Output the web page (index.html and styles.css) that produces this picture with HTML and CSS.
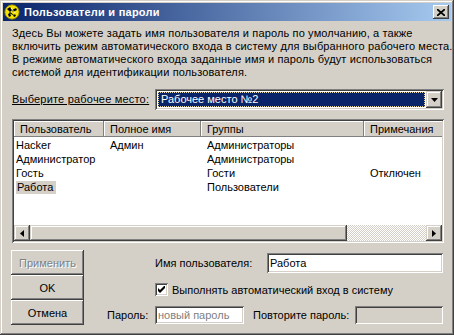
FILE: index.html
```html
<!DOCTYPE html>
<html lang="ru">
<head>
<meta charset="utf-8">
<title>Пользователи и пароли</title>
<link rel="stylesheet" href="styles.css">
</head>
<body>
<div class="window">
  <div class="titlebar">
    <svg class="appicon" viewBox="0 0 16 16" width="16" height="16">
      <circle cx="8" cy="8" r="7.2" fill="#f4e400" stroke="#8a7a00" stroke-width="0.9"/>
      <path d="M3 5 L6 3 L8 6 L6 8 Z" fill="#000"/>
      <path d="M6 8 L10 11 L11 10 L12 12 L10 13 L9 11 L5 9 Z" fill="#000"/>
      <path d="M8 6 L12 4 L13 6 L9 8 Z" fill="#000"/>
      <path d="M4 10 L6 9 L7 12 L5 13 Z" fill="#000"/>
      <path d="M7 4 L11 9" stroke="#fff" stroke-width="0.8"/>
    </svg>
    <span class="title">Пользователи и пароли</span>
    <div class="close">
      <svg viewBox="0 0 8 7" width="8" height="7">
        <path d="M0 0 L8 7 M8 0 L0 7" stroke="#000" stroke-width="1.7"/>
      </svg>
    </div>
  </div>

  <div class="body">
    <div class="intro">
      <div class="line">Здесь Вы можете задать имя пользователя и пароль по умолчанию, а также</div>
      <div class="line">включить режим автоматического входа в систему для выбранного рабочего места.</div>
      <div class="line">В режиме автоматического входа заданные имя и пароль будут использоваться</div>
      <div class="line">системой для идентификации пользователя.</div>
    </div>

    <div class="select-row">
      <span class="select-label">Выберите рабочее место:</span>
      <div class="combo">
        <div class="combo-value"><span>Рабочее место №2</span></div>
        <div class="combo-btn">
          <svg viewBox="0 0 7 4" width="7" height="4"><path d="M0 0 H7 L3.5 4 Z" fill="#000"/></svg>
        </div>
      </div>
    </div>

    <div class="listview">
      <div class="lv-header">
        <div class="hcell">Пользователь</div>
        <div class="hcell">Полное имя</div>
        <div class="hcell">Группы</div>
        <div class="hcell">Примечания</div>
      </div>
      <div class="lv-body">
        <div class="lv-row">
          <div class="cell first">Hacker</div>
          <div class="cell">Админ</div>
          <div class="cell">Администраторы</div>
          <div class="cell"></div>
        </div>
        <div class="lv-row">
          <div class="cell first">Администратор</div>
          <div class="cell"></div>
          <div class="cell">Администраторы</div>
          <div class="cell"></div>
        </div>
        <div class="lv-row">
          <div class="cell first">Гость</div>
          <div class="cell"></div>
          <div class="cell">Гости</div>
          <div class="cell">Отключен</div>
        </div>
        <div class="lv-row">
          <div class="cell first"><span class="sel">Работа</span></div>
          <div class="cell"></div>
          <div class="cell">Пользователи</div>
          <div class="cell"></div>
        </div>
      </div>
      <div class="hscroll">
        <div class="sbtn">
          <svg viewBox="0 0 4 7" width="4" height="7"><path d="M4 0 V7 L0 3.5 Z" fill="#000"/></svg>
        </div>
        <div class="thumb"></div>
        <div class="track"></div>
        <div class="sbtn">
          <svg viewBox="0 0 4 7" width="4" height="7"><path d="M0 0 V7 L4 3.5 Z" fill="#000"/></svg>
        </div>
      </div>
    </div>

    <div class="bottom">
      <div class="buttons">
        <div class="btn disabled">Применить</div>
        <div class="btn">OK</div>
        <div class="btn">Отмена</div>
      </div>
      <div class="form">
        <div class="frow name-row">
          <span class="name-label">Имя пользователя:</span>
          <div class="field name-field">Работа</div>
        </div>
        <div class="frow check-row">
          <div class="checkbox">
            <svg viewBox="0 0 7 7" width="7" height="7"><path d="M0 2 L2 4 L7 -1 V2 L2 7 L0 5 Z" fill="#000"/></svg>
          </div>
          <span class="check-label">Выполнять автоматический вход в систему</span>
        </div>
        <div class="frow pass-row">
          <span class="pass-label">Пароль:</span>
          <div class="field pass-field">новый пароль</div>
          <span class="repeat-label">Повторите пароль:</span>
          <div class="field repeat-field"></div>
        </div>
      </div>
    </div>
  </div>
</div>
</body>
</html>
```

FILE: styles.css
```css
* { box-sizing: border-box; }
html, body { margin: 0; padding: 0; }
body {
  width: 454px;
  height: 335px;
  overflow: hidden;
  background: #d4d0c8;
  font-family: "Liberation Sans", Arial, sans-serif;
  font-size: 11px;
  color: #000;
}

.window {
  width: 454px;
  height: 335px;
  padding: 3px;
  background: #d4d0c8;
  box-shadow: inset -1px -1px #404040, inset 1px 1px #d4d0c8,
              inset -2px -2px #808080, inset 2px 2px #fff;
  display: flex;
  flex-direction: column;
}

.titlebar {
  height: 18px;
  flex: none;
  display: flex;
  align-items: center;
  padding: 0 2px 0 1px;
  background: linear-gradient(to right, #0a246a, #a6caf0);
}
.appicon { flex: none; display: block; }
.title {
  flex: 1;
  margin-left: 4px;
  color: #fff;
  font-weight: bold;
  letter-spacing: 0.25px;
  line-height: 18px;
  white-space: nowrap;
}
.close {
  width: 16px;
  height: 14px;
  flex: none;
  display: flex;
  align-items: center;
  justify-content: center;
  background: #d4d0c8;
  box-shadow: inset -1px -1px #404040, inset 1px 1px #fff,
              inset -2px -2px #808080, inset 2px 2px #d4d0c8;
}
.close svg { display: block; }

.body {
  flex: 1;
  padding: 6px 7px 7px 9px;
  display: flex;
  flex-direction: column;
}

.intro { letter-spacing: 0.14px; }
.intro .line {
  line-height: 13px;
  height: 13px;
  white-space: nowrap;
}

.select-row {
  margin-top: 10px;
  height: 21px;
  display: flex;
  align-items: center;
}
.select-label {
  width: 143px;
  text-decoration: underline;
  letter-spacing: 0.2px;
  line-height: 13px;
  white-space: nowrap;
}
.combo {
  width: 289px;
  height: 21px;
  padding: 2px;
  display: flex;
  background: #fff;
  box-shadow: inset 1px 1px #808080, inset -1px -1px #fff,
              inset 2px 2px #404040, inset -2px -2px #d4d0c8;
}
.combo-value {
  flex: 1;
  margin: 1px;
  background: #0a246a;
  outline: 1px dotted #e8d8a8;
  outline-offset: -1px;
  color: #fff;
  line-height: 15px;
  padding-left: 3px;
  white-space: nowrap;
}
.combo-btn {
  width: 16px;
  flex: none;
  display: flex;
  align-items: center;
  justify-content: center;
  background: #d4d0c8;
  box-shadow: inset -1px -1px #404040, inset 1px 1px #d4d0c8,
              inset -2px -2px #808080, inset 2px 2px #fff;
}
.combo-btn svg { display: block; }

.listview {
  margin-top: 9px;
  width: 432px;
  height: 124px;
  padding: 2px;
  background: #fff;
  box-shadow: inset 1px 1px #808080, inset -1px -1px #fff,
              inset 2px 2px #404040, inset -2px -2px #d4d0c8;
  display: flex;
  flex-direction: column;
  overflow: hidden;
}
.lv-header, .lv-row {
  display: grid;
  grid-template-columns: 90px 97px 163px 78px;
}
.lv-header { height: 16px; flex: none; }
.hcell {
  height: 16px;
  padding: 2px 0 0 6px;
  line-height: 13px;
  background: #d4d0c8;
  border-right: 1px solid #808080;
  border-bottom: 1px solid #808080;
  box-shadow: inset 1px 1px #fff;
  white-space: nowrap;
  overflow: hidden;
}
.hcell:last-child { border-right: none; }
.lv-body {
  flex: 1;
  padding-top: 1px;
}
.lv-row { height: 14px; }
.cell {
  line-height: 14px;
  padding-left: 6px;
  white-space: nowrap;
}
.cell.first { padding-left: 2px; }
.sel {
  display: inline-block;
  background: #d4d0c8;
  line-height: 13px;
  padding: 0 3px 0 1px;
}

.hscroll {
  height: 16px;
  flex: none;
  display: flex;
}
.sbtn {
  width: 16px;
  flex: none;
  display: flex;
  align-items: center;
  justify-content: center;
  background: #d4d0c8;
  box-shadow: inset -1px -1px #404040, inset 1px 1px #d4d0c8,
              inset -2px -2px #808080, inset 2px 2px #fff;
}
.sbtn svg { display: block; }
.thumb {
  width: 317px;
  flex: none;
  background: #d4d0c8;
  box-shadow: inset -1px -1px #404040, inset 1px 1px #d4d0c8,
              inset -2px -2px #808080, inset 2px 2px #fff;
}
.track {
  flex: 1;
  background: repeating-conic-gradient(#d4d0c8 0 25%, #fff 0 50%) 0 0 / 2px 2px;
}

.bottom {
  margin-top: 7px;
  display: flex;
}
.buttons {
  width: 73px;
  margin-left: -1px;
  display: flex;
  flex-direction: column;
}
.btn {
  height: 25px;
  display: flex;
  align-items: center;
  justify-content: center;
  background: #d4d0c8;
  box-shadow: inset -1px -1px #404040, inset 1px 1px #fff,
              inset -2px -2px #808080, inset 2px 2px #d4d0c8;
}
.btn.disabled {
  color: #808080;
  text-shadow: 1px 1px #fff;
}

.form {
  margin-left: 23px;
  width: 336px;
  display: flex;
  flex-direction: column;
}
.frow { display: flex; align-items: center; white-space: nowrap; }
.name-row { margin-top: 3px; height: 20px; padding-left: 48px; }
.name-label { width: 112px; }
.field {
  background: #fff;
  padding: 2px 0 0 3px;
  line-height: 14px;
  box-shadow: inset 1px 1px #808080, inset -1px -1px #fff,
              inset 2px 2px #404040, inset -2px -2px #d4d0c8;
}
.name-field { width: 176px; height: 20px; padding-top: 3px; }
.check-row { margin-top: 10px; height: 13px; padding-left: 48px; }
.checkbox {
  width: 13px;
  height: 13px;
  flex: none;
  display: flex;
  align-items: center;
  justify-content: center;
  background: #fff;
  box-shadow: inset 1px 1px #808080, inset -1px -1px #fff,
              inset 2px 2px #404040, inset -2px -2px #d4d0c8;
}
.checkbox svg { display: block; }
.check-label { margin-left: 4px; }
.pass-row { margin-top: 10px; height: 18px; }
.pass-label { width: 48px; text-align: right; padding-right: 8px; }
.pass-field { width: 89px; height: 18px; color: #808080; }
.repeat-label { flex: 1; padding-left: 9px; }
.repeat-field { width: 88px; height: 18px; background: #d4d0c8; }
```
